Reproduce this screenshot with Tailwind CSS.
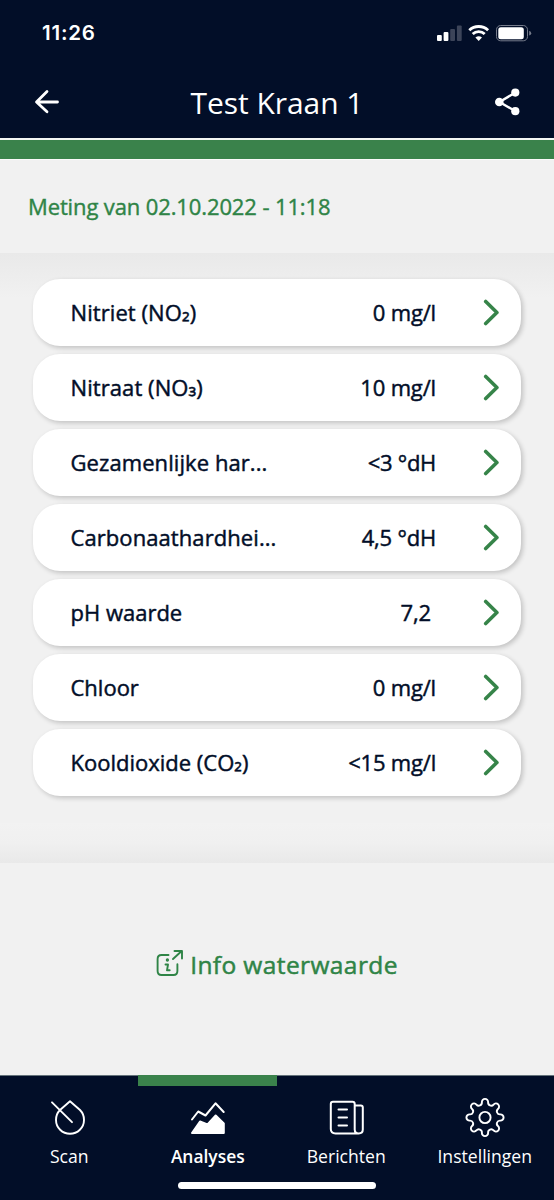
<!DOCTYPE html>
<html lang="nl">
<head>
<meta charset="utf-8">
<title>Test Kraan 1</title>
<script src="https://cdn.jsdelivr.net/npm/@tailwindcss/browser@4"></script>
</head>
<body class="bg-[#f1f1f1] font-['Open_Sans','Noto_Sans',sans-serif] text-[#020e28]">
<div class="flex h-[1200px] w-[554px] flex-col overflow-hidden">
  <header class="h-[138px] shrink-0 bg-[#020e28] text-white">
    <div class="flex h-[66px] items-center justify-between pl-[42px] pr-[22px]">
      <span class="pt-px font-['Inter',sans-serif] text-[20.5px] font-semibold tracking-[0.8px]">11:26</span>
      <svg class="h-[20px] w-[96px]" viewBox="436 23 96 20" fill="#fff">
        <rect x="437" y="35" width="4.8" height="6" rx="1"/><rect x="443.6" y="32" width="4.8" height="9" rx="1"/>
        <rect x="450.2" y="29" width="4.8" height="12" rx="1" fill="#3c4459"/><rect x="456.9" y="25.5" width="4.8" height="15.5" rx="1" fill="#3c4459"/>
        <path d="M469.3 30.2a14 14 0 0 1 18.8 0M472.7 34a8.8 8.8 0 0 1 12 0" fill="none" stroke="#fff" stroke-width="2.9"/>
        <path d="M475.4 37.6a5 5 0 0 1 6.6 0L478.7 41z"/>
        <rect x="496.5" y="25.5" width="31" height="15.3" rx="4.2" fill="none" stroke="#757b8b"/>
        <rect x="498.3" y="27.2" width="25.5" height="12" rx="2.5"/>
        <path d="M529.2 30.8q2 .6 2 2.4t-2 2.4z" fill="#757b8b"/>
      </svg>
    </div>
    <div class="flex h-[72px] items-center justify-between pl-[34px] pr-[34px]">
      <svg class="h-[26px] w-[26px]" viewBox="34 89 26 26" fill="none" stroke="#fff" stroke-width="2.8" stroke-linecap="round" stroke-linejoin="round"><path d="M57.500 102H36.700M47 91.500L36.500 102L47 111.800"/></svg>
      <h1 class="pt-[2px] text-[30px] leading-[40px] tracking-[-0.05px]">Test Kraan 1</h1>
      <svg class="h-[28px] w-[26px]" viewBox="494 88 26 28" fill="#fff"><path d="M515.5 92.5L499.5 102L515.5 111.3" fill="none" stroke="#fff" stroke-width="2.4"/><circle cx="515.3" cy="92.6" r="4.1"/><circle cx="499.3" cy="102" r="4.3"/><circle cx="515.3" cy="111.2" r="4.1"/></svg>
    </div>
  </header>
  <div class="h-[22px] shrink-0 border-b border-t-2 border-b-[#fafafa] border-t-[#f4f6f4] bg-[#3a824b]"></div>
  <div class="flex h-[93px] shrink-0 items-center pl-[28px] text-[22px] tracking-[-0.12px] text-[#2f8446] [-webkit-text-stroke:0.4px]"><span>Meting van 02.10.2022 - 11:18</span></div>
  <main class="relative flex h-[610px] shrink-0 flex-col gap-[8px] px-[33px] pt-[26px]">
    <div class="absolute inset-x-0 top-0 h-[45px] bg-linear-to-b from-[#e9e9e9] to-[#f1f1f1]"></div>
    <div class="absolute inset-x-0 bottom-0 h-[40px] bg-linear-to-t from-[#e9e9e9] via-[#f0f0f0] via-50% to-[#f2f2f2]"></div>
    <div class="relative flex h-[67px] shrink-0 items-center rounded-[27px] bg-white pl-[37.500px] pr-[21px] text-[22px] shadow-[2px_2px_5px_rgba(0,0,0,0.2)]"><span class="tracking-[0.08px] [-webkit-text-stroke:0.45px]">Nitriet (NO<span class="align-[3px] leading-none">₂</span>)</span><span class="ml-auto mr-[47px] tracking-[-0.15px] [-webkit-text-stroke:0.45px]">0 mg/l</span><svg class="h-[28px] w-[17px]" viewBox="0 0 17 28" fill="none" stroke="#368449" stroke-width="3.6" stroke-linecap="round" stroke-linejoin="round"><path d="M2.700 2.500L13.900 13.500L2.700 24.500"/></svg></div>
    <div class="relative flex h-[67px] shrink-0 items-center rounded-[27px] bg-white pl-[37.500px] pr-[21px] text-[22px] shadow-[2px_2px_5px_rgba(0,0,0,0.2)]"><span class="tracking-[0.08px] [-webkit-text-stroke:0.45px]">Nitraat (NO<span class="align-[3px] leading-none">₃</span>)</span><span class="ml-auto mr-[47px] tracking-[-0.15px] [-webkit-text-stroke:0.45px]">10 mg/l</span><svg class="h-[28px] w-[17px]" viewBox="0 0 17 28" fill="none" stroke="#368449" stroke-width="3.6" stroke-linecap="round" stroke-linejoin="round"><path d="M2.700 2.500L13.900 13.500L2.700 24.500"/></svg></div>
    <div class="relative flex h-[67px] shrink-0 items-center rounded-[27px] bg-white pl-[37.500px] pr-[21px] text-[22px] shadow-[2px_2px_5px_rgba(0,0,0,0.2)]"><span class="tracking-[0.08px] [-webkit-text-stroke:0.45px]">Gezamenlijke har...</span><span class="ml-auto mr-[47px] tracking-[-0.3px] [-webkit-text-stroke:0.45px]">&lt;3 °dH</span><svg class="h-[28px] w-[17px]" viewBox="0 0 17 28" fill="none" stroke="#368449" stroke-width="3.6" stroke-linecap="round" stroke-linejoin="round"><path d="M2.700 2.500L13.900 13.500L2.700 24.500"/></svg></div>
    <div class="relative flex h-[67px] shrink-0 items-center rounded-[27px] bg-white pl-[37.500px] pr-[21px] text-[22px] shadow-[2px_2px_5px_rgba(0,0,0,0.2)]"><span class="tracking-[0.08px] [-webkit-text-stroke:0.45px]">Carbonaathardhei...</span><span class="ml-auto mr-[47px] tracking-[-0.2px] [-webkit-text-stroke:0.45px]">4,5 °dH</span><svg class="h-[28px] w-[17px]" viewBox="0 0 17 28" fill="none" stroke="#368449" stroke-width="3.6" stroke-linecap="round" stroke-linejoin="round"><path d="M2.700 2.500L13.900 13.500L2.700 24.500"/></svg></div>
    <div class="relative flex h-[67px] shrink-0 items-center rounded-[27px] bg-white pl-[37.500px] pr-[21px] text-[22px] shadow-[2px_2px_5px_rgba(0,0,0,0.2)]"><span class="[-webkit-text-stroke:0.45px]">pH waarde</span><span class="ml-auto mr-[52px] tracking-[-0.15px] [-webkit-text-stroke:0.45px]">7,2</span><svg class="h-[28px] w-[17px]" viewBox="0 0 17 28" fill="none" stroke="#368449" stroke-width="3.6" stroke-linecap="round" stroke-linejoin="round"><path d="M2.700 2.500L13.900 13.500L2.700 24.500"/></svg></div>
    <div class="relative flex h-[67px] shrink-0 items-center rounded-[27px] bg-white pl-[37.500px] pr-[21px] text-[22px] shadow-[2px_2px_5px_rgba(0,0,0,0.2)]"><span class="[-webkit-text-stroke:0.45px]">Chloor</span><span class="ml-auto mr-[47px] tracking-[-0.15px] [-webkit-text-stroke:0.45px]">0 mg/l</span><svg class="h-[28px] w-[17px]" viewBox="0 0 17 28" fill="none" stroke="#368449" stroke-width="3.6" stroke-linecap="round" stroke-linejoin="round"><path d="M2.700 2.500L13.900 13.500L2.700 24.500"/></svg></div>
    <div class="relative flex h-[67px] shrink-0 items-center rounded-[27px] bg-white pl-[37.500px] pr-[21px] text-[22px] shadow-[2px_2px_5px_rgba(0,0,0,0.2)]"><span class="[-webkit-text-stroke:0.45px]">Kooldioxide (CO<span class="align-[3px] leading-none">₂</span>)</span><span class="ml-auto mr-[47px] tracking-[-0.2px] [-webkit-text-stroke:0.45px]">&lt;15 mg/l</span><svg class="h-[28px] w-[17px]" viewBox="0 0 17 28" fill="none" stroke="#368449" stroke-width="3.6" stroke-linecap="round" stroke-linejoin="round"><path d="M2.700 2.500L13.900 13.500L2.700 24.500"/></svg></div>
  </main>
  <section class="flex h-[212px] shrink-0 items-start justify-center pt-[84px] text-[#2f8446]">
    <div class="flex h-[36px] items-center gap-[6px]">
      <svg class="mb-[4px] h-[28px] w-[28px]" viewBox="156 949 28 28" fill="none" stroke="currentColor" stroke-width="1.9" stroke-linecap="round" stroke-linejoin="round"><path d="M168.500 955H161.500Q157.600 955 157.600 959V971Q157.600 975 161.500 975H173.500Q177.400 975 177.400 971V964.300M173 959L181.700 951M174.500 951H182V958.500M165.500 964.500H168L167 970.300H169.700"/><circle cx="167.400" cy="960" r=".7" fill="currentColor"/></svg>
      <span class="text-[24.500px] leading-[36px] tracking-[0.4px] [-webkit-text-stroke:0.5px]">Info waterwaarde</span>
    </div>
  </section>
  <nav class="relative grid h-[125px] shrink-0 grid-cols-4 border-t border-[#64727a] bg-[#020e28] text-[17.600px] text-white">
    <div class="absolute left-[138px] top-[-1px] h-[11px] w-[139px] bg-[#3a824b]"></div>
    <div class="absolute bottom-[11px] left-[178px] h-[7px] w-[198px] rounded-full bg-white"></div>
    <div class="flex flex-col items-center pt-[20px]">
      <svg class="h-[44px] w-[44px]" viewBox="47 1096 44 44" fill="none" stroke="#fff" stroke-width="1.9" stroke-linecap="round" stroke-linejoin="round"><path d="M70 1101.300L60 1110A14 14 0 1 0 80 1110ZM52 1102.300L72 1122.200"/></svg>
      <span class="leading-[32px]">Scan</span>
    </div>
    <div class="flex flex-col items-center pt-[20px]">
      <svg class="h-[44px] w-[44px]" viewBox="186 1096 44 44" fill="none" stroke="#fff" stroke-width="2" stroke-linecap="round" stroke-linejoin="round"><path d="M192 1119.500L198.200 1111.500L205.500 1115.500L215.500 1103.300L223.700 1112"/><path d="M192 1133L200 1121.500L207.500 1124.500L215.700 1115.500L223.800 1123.500V1133Z" fill="#fff"/></svg>
      <span class="text-[17.400px] font-semibold leading-[32px]">Analyses</span>
    </div>
    <div class="flex flex-col items-center pt-[20px]">
      <svg class="h-[44px] w-[44px]" viewBox="324 1096 44 44" fill="none" stroke="#fff" stroke-width="2" stroke-linecap="round" stroke-linejoin="round"><path d="M358.500 1133.400H335.500Q330.800 1133.400 330.800 1129V1104Q330.800 1101.800 333 1101.800H352.500Q354.700 1101.800 354.700 1104V1129.500Q354.700 1133.400 358.700 1133.400Q362.800 1133.400 362.800 1129.500V1107.500Q362.800 1105.500 360.800 1105.500H355M338.500 1109.500H347M338.500 1117.500H347M338.500 1125.500H347"/></svg>
      <span class="leading-[32px]">Berichten</span>
    </div>
    <div class="flex flex-col items-center pt-[20px]">
      <svg class="h-[44px] w-[44px]" viewBox="-22 -21.500 44 44" fill="none" stroke="#fff" stroke-width="1.900" stroke-linejoin="round"><circle r="5.600"/><path id="gear"/></svg>
      <span class="leading-[32px]">Instellingen</span>
    </div>
  </nav>
</div>
<script>
  // Eight round teeth: arcs bulging out and in alternate, meeting halfway between their centres.
  const at = (r, deg) => [r * Math.cos(deg * Math.PI / 180), r * Math.sin(deg * Math.PI / 180)];
  const mid = (p, q) => [(p[0] + q[0]) / 2, (p[1] + q[1]) / 2];
  const pt = p => p[0].toFixed(2) + ' ' + p[1].toFixed(2);
  const rad = 3.11;
  let d = 'M' + pt(mid(at(15.5, 0), at(16.2, -22.5)));
  for (let i = 0; i < 8; i++) {
    const tip = at(15.5, i * 45), dip = at(16.2, i * 45 + 22.5), next = at(15.5, i * 45 + 45);
    d += `A${rad} ${rad} 0 1 1 ${pt(mid(tip, dip))}A${rad} ${rad} 0 0 0 ${pt(mid(dip, next))}`;
  }
  document.getElementById('gear').setAttribute('d', d + 'Z');
</script>
</body>
</html>
